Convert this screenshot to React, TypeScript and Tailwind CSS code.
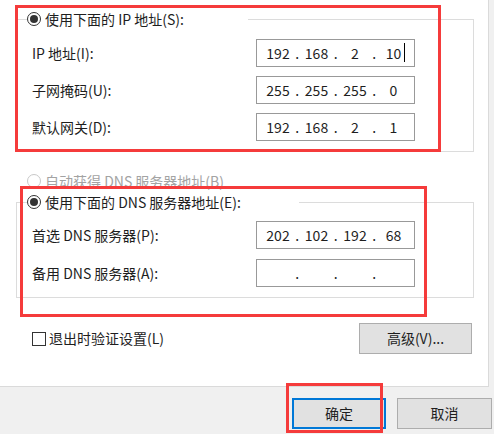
import React from "react";

type Octets = [string, string, string, string];

function Radio({ checked, disabled }: { checked?: boolean; disabled?: boolean }) {
  return (
    <span
      className={`flex h-[14px] w-[14px] shrink-0 items-center justify-center rounded-full border bg-white ${
        disabled ? "border-[#c8c8c8]" : "border-[#333333]"
      }`}
    >
      {checked && <span className="h-[8px] w-[8px] rounded-full bg-[#333333]" />}
    </span>
  );
}

function IpField({ octets, caret }: { octets: Octets; caret?: boolean }) {
  return (
    <div className="flex h-[28px] w-[159px] items-center border border-[#999999] bg-white pl-[4px] text-[14px] text-[#1e1e1e]">
      {octets.map((o, i) => (
        <React.Fragment key={i}>
          <span className="relative w-[34px] text-center leading-none">
            {o}
            {caret && i === 3 && (
              <span className="absolute right-[6px] top-[-3px] h-[19px] w-px bg-black" />
            )}
          </span>
          {i < 3 && <span className="w-[4.5px] text-center leading-none">.</span>}
        </React.Fragment>
      ))}
    </div>
  );
}

function FieldRow({ label, octets, caret }: { label: string; octets: Octets; caret?: boolean }) {
  return (
    <div className="flex items-center">
      <span className="w-[239px] pl-[15px] text-[14px]">{label}</span>
      <IpField octets={octets} caret={caret} />
    </div>
  );
}

function GroupBox({
  title,
  legendWidth,
  children,
}: {
  title: string;
  legendWidth: string;
  children: React.ReactNode;
}) {
  return (
    <div className="ml-[16px] w-[458px] border border-[#dcdcdc] pb-[10px]">
      <div className={`-mt-[11px] ml-[10px] flex h-[20px] items-center gap-[4px] bg-white ${legendWidth}`}>
        <Radio checked />
        <span className="text-[14px]">{title}</span>
      </div>
      {children}
    </div>
  );
}

export default function App() {
  return (
    <div className="relative h-[434px] w-[494px] overflow-hidden bg-[#f0f0f0] font-['Noto_Sans_CJK_SC','Noto_Sans',sans-serif] text-[#1e1e1e]">
      <div className="h-[387px] w-[489px] border-b border-r border-[#dadada] bg-white pt-[19px]">
        <GroupBox title="使用下面的 IP 地址(S):" legendWidth="w-[221px]">
          <div className="mt-[10px] flex flex-col gap-[9px]">
            <FieldRow label="IP 地址(I):" octets={["192", "168", "2", "10"]} caret />
            <FieldRow label="子网掩码(U):" octets={["255", "255", "255", "0"]} />
            <FieldRow label="默认网关(D):" octets={["192", "168", "2", "1"]} />
          </div>
        </GroupBox>

        <div className="ml-[27px] mt-[19px] flex h-[20px] items-center gap-[4px] text-[#a3a3a3]">
          <Radio disabled />
          <span className="text-[14px]">自动获得 DNS 服务器地址(B)</span>
        </div>

        <div className="mt-[11px]">
          <GroupBox title="使用下面的 DNS 服务器地址(E):" legendWidth="w-[272px]">
            <div className="mt-[9px] flex flex-col gap-[10px]">
              <FieldRow label="首选 DNS 服务器(P):" octets={["202", "102", "192", "68"]} />
              <FieldRow label="备用 DNS 服务器(A):" octets={["", "", "", ""]} />
            </div>
          </GroupBox>
        </div>

        <div className="ml-[32px] mr-[16px] mt-[25px] flex items-center justify-between">
          <label className="flex items-center gap-[3px]">
            <span className="h-[14px] w-[14px] border border-[#333333] bg-white" />
            <span className="text-[14px]">退出时验证设置(L)</span>
          </label>
          <button className="h-[31px] w-[113px] border border-[#adadad] bg-[#e1e1e1] text-[14px]">
            高级(V)...
          </button>
        </div>
      </div>

      <div className="flex justify-end gap-[11px] pr-[2px] pt-[11px]">
        <button className="h-[31px] w-[94px] border-2 border-[#0078d7] bg-[#e1e1e1] text-[14px]">
          确定
        </button>
        <button className="h-[31px] w-[95px] border border-[#adadad] bg-[#e1e1e1] text-[14px]">
          取消
        </button>
      </div>

      {/* red callout frames */}
      <div className="pointer-events-none absolute left-[15px] top-[5px] h-[147px] w-[426px] border-[3px] border-[#f53b3b]" />
      <div className="pointer-events-none absolute left-[20px] top-[186px] h-[131px] w-[407px] border-[3px] border-[#f53b3b]" />
      <div className="pointer-events-none absolute left-[286px] top-[383px] h-[50px] w-[97px] border-[3px] border-[#f53b3b]" />
    </div>
  );
}
